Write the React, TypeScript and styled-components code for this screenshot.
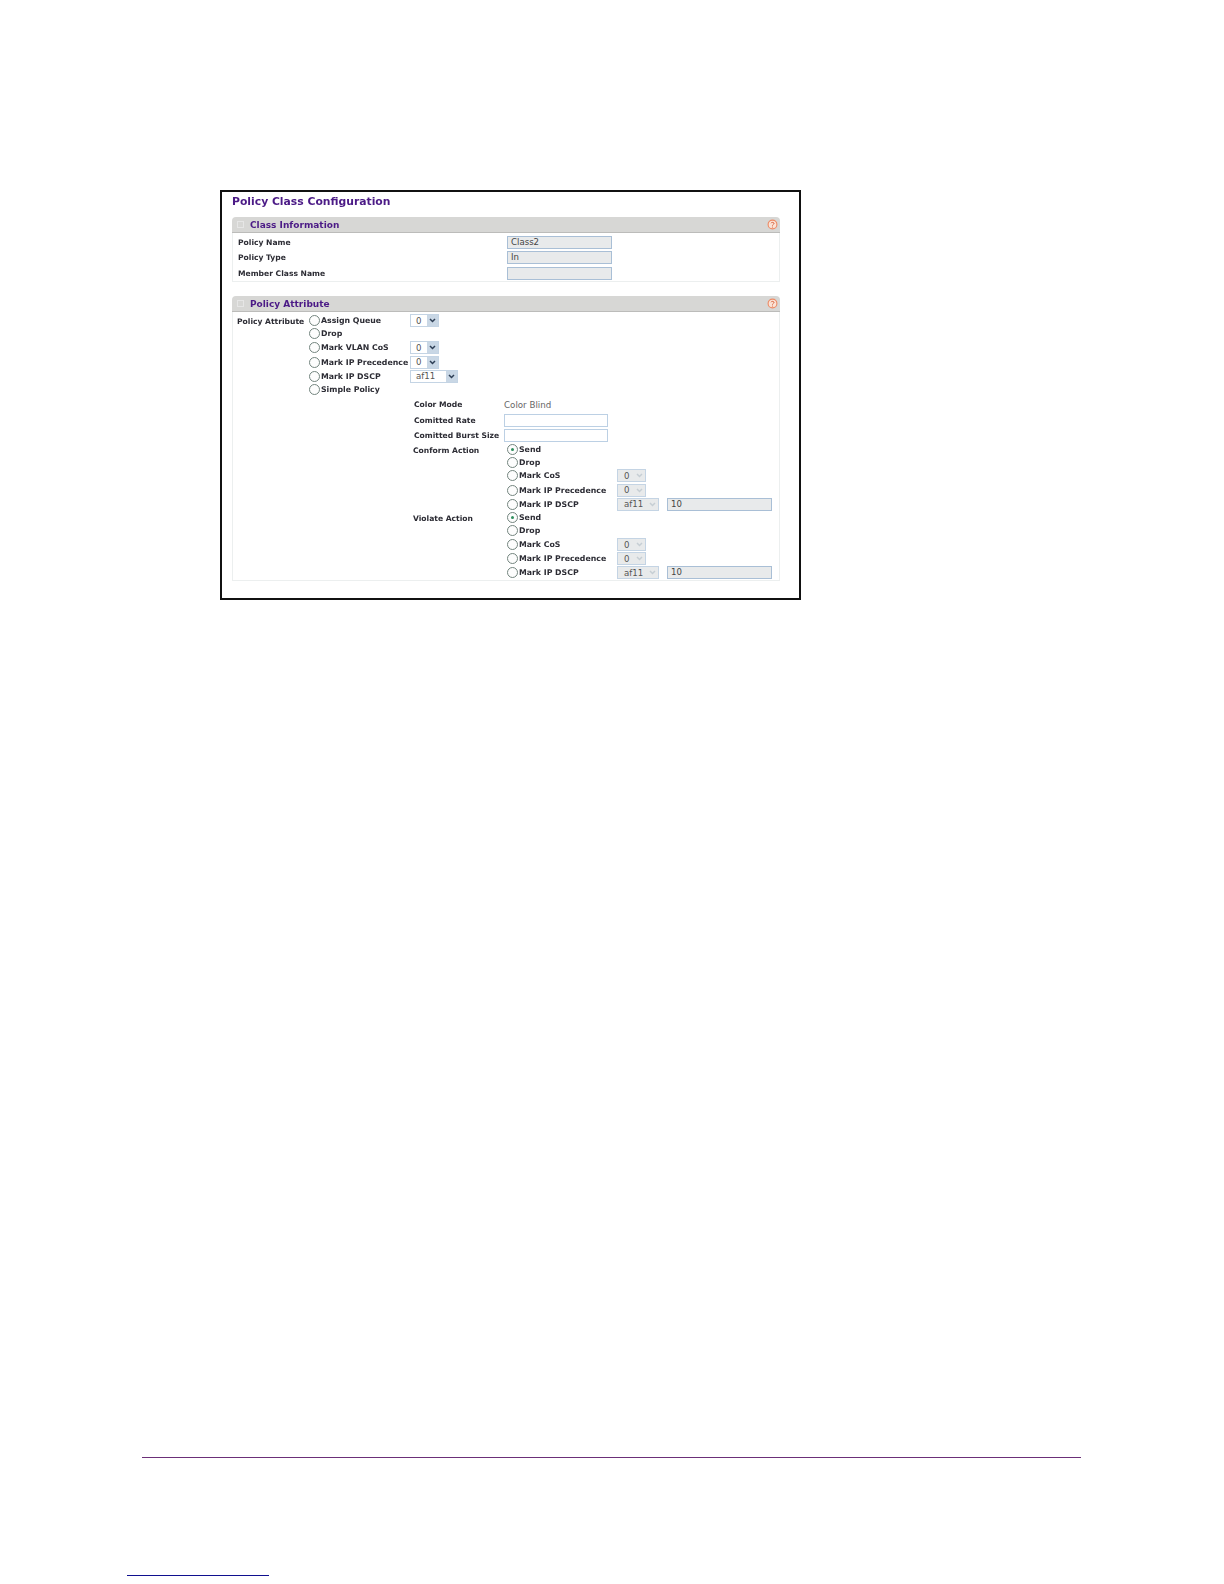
import React from 'react'
import styled, { createGlobalStyle } from 'styled-components'

const GlobalStyle = createGlobalStyle`
  html, body {
    margin: 0;
    padding: 0;
    background: #fff;
  }
  body {
    font-family: 'DejaVu Sans', Verdana, sans-serif;
  }
`

const Page = styled.div`
  width: 1224px;
  height: 1584px;
  padding-top: 190px;
  box-sizing: border-box;
  display: flex;
  flex-direction: column;
`

const Figure = styled.div`
  width: 581px;
  height: 410px;
  margin-left: 220px;
  box-sizing: border-box;
  border: 2px solid #111;
  padding: 0 19px 0 10px;
  display: flex;
  flex-direction: column;
`

const Title = styled.h1`
  margin: 0;
  height: 25px;
  line-height: 19px;
  font-size: 10.8px;
  font-weight: 700;
  color: #4b1a86;
  white-space: nowrap;
  filter: blur(0.3px);
`

const Section = styled.section<{ $gap?: number }>`
  margin-top: ${({ $gap }) => $gap ?? 0}px;
  display: flex;
  flex-direction: column;
`

const SectionHead = styled.div`
  height: 16px;
  box-sizing: border-box;
  display: flex;
  align-items: center;
  gap: 6px;
  padding: 0 0 0 5px;
  background: #d7d7d5;
  border-bottom: 1px solid #bcbcba;
  border-radius: 4px 4px 0 0;
`

const HeadMark = styled.span`
  width: 5px;
  height: 5px;
  border: 1px solid #e6e6e6;
  flex-shrink: 0;
`

const HeadTitle = styled.h2`
  margin: 0;
  flex: 1;
  font-size: 9px;
  font-weight: 700;
  color: #4b1a86;
  white-space: nowrap;
  filter: blur(0.3px);
`

const HelpIcon = () => (
  <svg width="11" height="11" viewBox="0 0 11 11" style={{ marginRight: 2 }}>
    <circle cx="5.5" cy="5.5" r="4.4" fill="#fbe3d6" stroke="#ee8a64" strokeWidth="1.1" />
    <path d="M4 4.2c.2-1 2.9-1.2 3 .2 0 1-1.5 1-1.5 2.2" fill="none" stroke="#d9603a" strokeWidth="1" />
    <circle cx="5.5" cy="8" r=".6" fill="#d9603a" />
  </svg>
)

const SectionBody = styled.div`
  border: 1px solid #ecefef;
  border-top: none;
  box-sizing: border-box;
`

const InfoBody = styled(SectionBody)`
  height: 49px;
  padding: 2px 0 0 5px;
  display: flex;
  flex-direction: column;
`

const InfoRow = styled.div`
  height: 16.2px;
  display: grid;
  grid-template-columns: 269px 105px;
  align-items: center;
`

const Label = styled.span`
  font-size: 7.6px;
  font-weight: 700;
  color: #2c2c34;
  white-space: nowrap;
  filter: blur(0.25px);
`

const TextField = styled.div<{ $width: number; $disabled?: boolean }>`
  width: ${({ $width }) => $width}px;
  height: 13px;
  box-sizing: border-box;
  border: 1px solid ${({ $disabled }) => ($disabled ? '#a9bfd6' : '#bcd0e4')};
  background: ${({ $disabled }) => ($disabled ? '#e8eaeb' : '#fff')};
  padding-left: 3px;
  font-size: 8.6px;
  line-height: 11px;
  color: #444;
`

const AttributeBody = styled(SectionBody)`
  height: 269px;
  padding: 2px 0 0 4px;
  display: grid;
  grid-template-columns: 72px 1fr;
  grid-template-rows: auto auto;
`

const AttributeLabel = styled(Label)`
  line-height: 14px;
  padding-top: 1px;
`

const OptionList = styled.div`
  display: flex;
  flex-direction: column;
`

const OptionRow = styled.div<{ $height: number; $labelWidth: number }>`
  height: ${({ $height }) => $height}px;
  display: grid;
  grid-template-columns: ${({ $labelWidth }) => $labelWidth}px auto 1fr;
  align-items: center;
`

const OptionLabel = styled.label`
  display: flex;
  align-items: center;
  gap: 1px;
  font-size: 7.8px;
  font-weight: 700;
  color: #2c2c34;
  white-space: nowrap;
`

const OptionText = styled.span`
  filter: blur(0.25px);
`

const Radio = styled.span<{ $checked?: boolean }>`
  width: 11px;
  height: 11px;
  box-sizing: border-box;
  border: 1px solid #74857f;
  border-radius: 50%;
  background: #fdfdfd;
  flex-shrink: 0;
  display: flex;
  align-items: center;
  justify-content: center;

  &::after {
    content: '';
    display: ${({ $checked }) => ($checked ? 'block' : 'none')};
    width: 3px;
    height: 3px;
    border-radius: 50%;
    background: #2f8f5e;
  }
`

const Select = styled.div<{ $width: number; $disabled?: boolean }>`
  width: ${({ $width }) => $width}px;
  height: 13px;
  box-sizing: border-box;
  border: 1px solid #c4d4e4;
  background: ${({ $disabled }) => ($disabled ? '#e8eaeb' : '#fff')};
  display: flex;
  align-items: center;
  justify-content: space-between;
  padding-left: ${({ $disabled }) => ($disabled ? 6 : 5)}px;
  font-size: 8.6px;
  color: #555;
`

const SelectArrow = styled.span<{ $disabled?: boolean }>`
  width: 11px;
  height: 11px;
  display: flex;
  align-items: center;
  justify-content: center;
  background: ${({ $disabled }) => ($disabled ? 'transparent' : '#c9d7e5')};
`

const Arrow = ({ color }: { color: string }) => (
  <svg width="7" height="5" viewBox="0 0 7 5">
    <path d="M1 1l2.5 2.5L6 1" fill="none" stroke={color} strokeWidth="1.5" />
  </svg>
)

const Dropdown = ({ value, width, disabled }: { value: string; width: number; disabled?: boolean }) => (
  <Select $width={width} $disabled={disabled}>
    {value}
    <SelectArrow $disabled={disabled}>
      <Arrow color={disabled ? '#c6ced4' : '#2e3f55'} />
    </SelectArrow>
  </Select>
)

const SimpleArea = styled.div`
  grid-column: 1 / 3;
  padding-left: 176px;
  display: grid;
  grid-template-columns: 91px 1fr;
`

const SimpleLabel = styled(Label)<{ $height: number; $offset?: number }>`
  height: ${({ $height }) => $height}px;
  line-height: ${({ $height }) => $height}px;
  margin-left: ${({ $offset }) => $offset ?? 0}px;
`

const SimpleValue = styled.div<{ $height: number }>`
  height: ${({ $height }) => $height}px;
  display: flex;
  align-items: center;
  font-size: 8.7px;
  color: #666;
`

const ActionGroup = styled.div`
  padding-left: 3px;
  display: flex;
  flex-direction: column;
`

const ActionLabel = styled(Label)`
  line-height: 13px;
  padding-top: 1px;
`

const Extra = styled.div`
  display: flex;
  align-items: center;
  gap: 8px;
`

const FooterRule = styled.div`
  width: 939px;
  height: 1px;
  margin: 857px 0 0 142px;
  background: #6b2f78;
`

const PageLink = styled.div`
  width: 142px;
  height: 1px;
  margin: 117px 0 0 127px;
  background: #10108f;
`

const topOptions = [
  { label: 'Assign Queue', height: 13, select: '0', width: 29 },
  { label: 'Drop', height: 13.5 },
  { label: 'Mark VLAN CoS', height: 14.5, select: '0', width: 29 },
  { label: 'Mark IP Precedence', height: 14, select: '0', width: 29 },
  { label: 'Mark IP DSCP', height: 14, select: 'af11', width: 48 },
  { label: 'Simple Policy', height: 13.5 },
]

const actionOptions = [
  { label: 'Send', height: 13, checked: true },
  { label: 'Drop', height: 13 },
  { label: 'Mark CoS', height: 14.15, select: '0', width: 29 },
  { label: 'Mark IP Precedence', height: 14.15, select: '0', width: 29 },
  { label: 'Mark IP DSCP', height: 14.15, select: 'af11', width: 42, field: '10' },
]

const ActionOptions = () => (
  <ActionGroup>
    {actionOptions.map((option) => (
      <OptionRow key={option.label} $height={option.height} $labelWidth={110}>
        <OptionLabel>
          <Radio $checked={option.checked} />
          <OptionText>{option.label}</OptionText>
        </OptionLabel>
        {option.select && (
          <Extra>
            <Dropdown value={option.select} width={option.width} disabled />
            {option.field && (
              <TextField $width={105} $disabled>
                {option.field}
              </TextField>
            )}
          </Extra>
        )}
      </OptionRow>
    ))}
  </ActionGroup>
)

const App = () => {
  return (
    <Page>
      <GlobalStyle />
      <Figure>
        <Title>Policy Class Configuration</Title>
        <Section>
          <SectionHead>
            <HeadMark />
            <HeadTitle>Class Information</HeadTitle>
            <HelpIcon />
          </SectionHead>
          <InfoBody>
            <InfoRow>
              <Label>Policy Name</Label>
              <TextField $width={105} $disabled>Class2</TextField>
            </InfoRow>
            <InfoRow>
              <Label>Policy Type</Label>
              <TextField $width={105} $disabled>In</TextField>
            </InfoRow>
            <InfoRow>
              <Label>Member Class Name</Label>
              <TextField $width={105} $disabled />
            </InfoRow>
          </InfoBody>
        </Section>
        <Section $gap={14}>
          <SectionHead>
            <HeadMark />
            <HeadTitle>Policy Attribute</HeadTitle>
            <HelpIcon />
          </SectionHead>
          <AttributeBody>
            <AttributeLabel>Policy Attribute</AttributeLabel>
            <OptionList>
              {topOptions.map((option) => (
                <OptionRow key={option.label} $height={option.height} $labelWidth={101}>
                  <OptionLabel>
                    <Radio />
                    <OptionText>{option.label}</OptionText>
                  </OptionLabel>
                  {option.select && <Dropdown value={option.select} width={option.width} />}
                </OptionRow>
              ))}
            </OptionList>
            <SimpleArea>
              <SimpleLabel $height={15.5} $offset={1}>Color Mode</SimpleLabel>
              <SimpleValue $height={15.5}>Color Blind</SimpleValue>
              <SimpleLabel $height={16} $offset={1}>Comitted Rate</SimpleLabel>
              <SimpleValue $height={16}><TextField $width={104} /></SimpleValue>
              <SimpleLabel $height={14} $offset={1}>Comitted Burst Size</SimpleLabel>
              <SimpleValue $height={14}><TextField $width={104} /></SimpleValue>
              <ActionLabel>Conform Action</ActionLabel>
              <ActionOptions />
              <ActionLabel>Violate Action</ActionLabel>
              <ActionOptions />
            </SimpleArea>
          </AttributeBody>
        </Section>
      </Figure>
      <FooterRule />
      <PageLink />
    </Page>
  )
}

export default App
